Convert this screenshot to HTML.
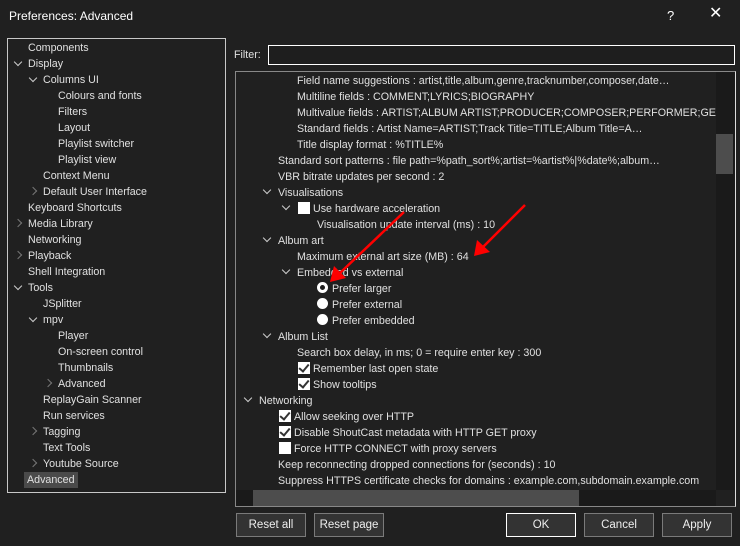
<!DOCTYPE html><html><head><style>
*{margin:0;padding:0;box-sizing:border-box}
body{width:740px;height:546px;background:#202020;font-family:"Liberation Sans",sans-serif;font-size:10.7px;color:#e0e0e0;position:relative;overflow:hidden}
.a{position:absolute;white-space:nowrap;line-height:16px;margin-top:1px}
.btn{position:absolute;top:513px;height:24px;width:70px;border:1px solid #7a7a7a;background:#333;text-align:center;line-height:22px;color:#eee;font-size:11.5px}
.cb{position:absolute;width:12px;height:12px;background:#fff}
.cb.k::after{content:"";position:absolute;left:3px;top:0px;width:4px;height:8px;border:solid #333;border-width:0 2px 2px 0;transform:rotate(40deg)}
.rd{position:absolute;width:11px;height:11px;border-radius:50%;background:#fff}
.ch{position:absolute;width:6px;height:6px;border:solid #ccc;border-width:0 1.5px 1.5px 0;transform:rotate(45deg)}
.cr{position:absolute;width:6px;height:6px;border:solid #777;border-width:0 1.5px 1.5px 0;transform:rotate(-45deg)}
#clip{position:absolute;left:236px;top:72px;width:480px;height:418px;overflow:hidden}
#clip>div{margin-left:-236px;margin-top:-72px;position:relative}
</style></head><body>
<div class="a" style="left:9px;top:7px;font-size:12px;color:#fff">Preferences: Advanced</div>
<div class="a" style="left:667px;top:7px;font-size:13px;color:#fff">?</div>
<div class="a" style="left:709px;top:5px;font-size:16px;color:#fff">✕</div>
<div style="position:absolute;left:7px;top:38px;width:219px;height:455px;border:1px solid #c8c8c8"></div>
<div class="a" style="left:28px;top:39px">Components</div>
<div class="ch" style="left:15px;top:59px"></div><div class="a" style="left:28px;top:55px">Display</div>
<div class="ch" style="left:30px;top:75px"></div><div class="a" style="left:43px;top:71px">Columns UI</div>
<div class="a" style="left:58px;top:87px">Colours and fonts</div>
<div class="a" style="left:58px;top:103px">Filters</div>
<div class="a" style="left:58px;top:119px">Layout</div>
<div class="a" style="left:58px;top:135px">Playlist switcher</div>
<div class="a" style="left:58px;top:151px">Playlist view</div>
<div class="a" style="left:43px;top:167px">Context Menu</div>
<div class="cr" style="left:30px;top:188px"></div><div class="a" style="left:43px;top:183px">Default User Interface</div>
<div class="a" style="left:28px;top:199px">Keyboard Shortcuts</div>
<div class="cr" style="left:15px;top:220px"></div><div class="a" style="left:28px;top:215px">Media Library</div>
<div class="a" style="left:28px;top:231px">Networking</div>
<div class="cr" style="left:15px;top:252px"></div><div class="a" style="left:28px;top:247px">Playback</div>
<div class="a" style="left:28px;top:263px">Shell Integration</div>
<div class="ch" style="left:15px;top:283px"></div><div class="a" style="left:28px;top:279px">Tools</div>
<div class="a" style="left:43px;top:295px">JSplitter</div>
<div class="ch" style="left:30px;top:315px"></div><div class="a" style="left:43px;top:311px">mpv</div>
<div class="a" style="left:58px;top:327px">Player</div>
<div class="a" style="left:58px;top:343px">On-screen control</div>
<div class="a" style="left:58px;top:359px">Thumbnails</div>
<div class="cr" style="left:45px;top:380px"></div><div class="a" style="left:58px;top:375px">Advanced</div>
<div class="a" style="left:43px;top:391px">ReplayGain Scanner</div>
<div class="a" style="left:43px;top:407px">Run services</div>
<div class="cr" style="left:30px;top:428px"></div><div class="a" style="left:43px;top:423px">Tagging</div>
<div class="a" style="left:43px;top:439px">Text Tools</div>
<div class="cr" style="left:30px;top:460px"></div><div class="a" style="left:43px;top:455px">Youtube Source</div>
<div class="a" style="left:24px;top:471px;background:#4a4a4a;padding:0 3px">Advanced</div>

<div class="a" style="left:234px;top:46px">Filter:</div>
<div style="position:absolute;left:268px;top:45px;width:467px;height:20px;border:1px solid #fff;background:#1e1e1e"></div>
<div style="position:absolute;left:235px;top:71px;width:501px;height:436px;border:1px solid #888;border-right-color:#ddd"></div>
<div style="position:absolute;left:716px;top:72px;width:19px;height:418px;background:#1a1a1a"></div>
<div style="position:absolute;left:716px;top:134px;width:17px;height:40px;background:#4d4d4d"></div>
<div style="position:absolute;left:236px;top:490px;width:480px;height:16px;background:#1a1a1a"></div>
<div style="position:absolute;left:253px;top:490px;width:326px;height:16px;background:#4d4d4d"></div>
<div id="clip"><div>
<div class="a" style="left:297px;top:72px">Field name suggestions : artist,title,album,genre,tracknumber,composer,date…</div>
<div class="a" style="left:297px;top:88px">Multiline fields : COMMENT;LYRICS;BIOGRAPHY</div>
<div class="a" style="left:297px;top:104px">Multivalue fields : ARTIST;ALBUM ARTIST;PRODUCER;COMPOSER;PERFORMER;GE…</div>
<div class="a" style="left:297px;top:120px">Standard fields : Artist Name=ARTIST;Track Title=TITLE;Album Title=A…</div>
<div class="a" style="left:297px;top:136px">Title display format : %TITLE%</div>
<div class="a" style="left:278px;top:152px">Standard sort patterns : file path=%path_sort%;artist=%artist%|%date%;album…</div>
<div class="a" style="left:278px;top:168px">VBR bitrate updates per second : 2</div>
<div class="ch" style="left:264px;top:187px"></div><div class="a" style="left:278px;top:184px">Visualisations</div>
<div class="ch" style="left:283px;top:203px"></div><div class="cb" style="left:298px;top:202px"></div><div class="a" style="left:313px;top:200px">Use hardware acceleration</div>
<div class="a" style="left:317px;top:216px">Visualisation update interval (ms) : 10</div>
<div class="ch" style="left:264px;top:235px"></div><div class="a" style="left:278px;top:232px">Album art</div>
<div class="a" style="left:297px;top:248px">Maximum external art size (MB) : 64</div>
<div class="ch" style="left:283px;top:267px"></div><div class="a" style="left:297px;top:264px">Embedded vs external</div>
<div class="rd" style="left:317px;top:282px;background:#1e1e1e;border:3px solid #fff"></div><div class="a" style="left:332px;top:280px">Prefer larger</div>
<div class="rd" style="left:317px;top:298px"></div><div class="a" style="left:332px;top:296px">Prefer external</div>
<div class="rd" style="left:317px;top:314px"></div><div class="a" style="left:332px;top:312px">Prefer embedded</div>
<div class="ch" style="left:264px;top:331px"></div><div class="a" style="left:278px;top:328px">Album List</div>
<div class="a" style="left:297px;top:344px">Search box delay, in ms; 0 = require enter key : 300</div>
<div class="cb k" style="left:298px;top:362px"></div><div class="a" style="left:313px;top:360px">Remember last open state</div>
<div class="cb k" style="left:298px;top:378px"></div><div class="a" style="left:313px;top:376px">Show tooltips</div>
<div class="ch" style="left:245px;top:395px"></div><div class="a" style="left:259px;top:392px">Networking</div>
<div class="cb k" style="left:279px;top:410px"></div><div class="a" style="left:294px;top:408px">Allow seeking over HTTP</div>
<div class="cb k" style="left:279px;top:426px"></div><div class="a" style="left:294px;top:424px">Disable ShoutCast metadata with HTTP GET proxy</div>
<div class="cb" style="left:279px;top:442px"></div><div class="a" style="left:294px;top:440px">Force HTTP CONNECT with proxy servers</div>
<div class="a" style="left:278px;top:456px">Keep reconnecting dropped connections for (seconds) : 10</div>
<div class="a" style="left:278px;top:472px">Suppress HTTPS certificate checks for domains : example.com,subdomain.example.com</div>
</div></div>
<svg style="position:absolute;left:0;top:0" width="740" height="546"><g stroke="#f00" stroke-width="2.5" fill="#f00">
<line x1="404" y1="212" x2="340" y2="273"/><polygon points="330,282 334,266 346,278" stroke="none"/>
<line x1="525" y1="205" x2="482" y2="248"/><polygon points="474,256 477,240 490,252" stroke="none"/></g></svg>
<div class="btn" style="left:236px">Reset all</div>
<div class="btn" style="left:314px">Reset page</div>
<div class="btn" style="left:506px;border-color:#fff">OK</div>
<div class="btn" style="left:584px">Cancel</div>
<div class="btn" style="left:662px">Apply</div>
</body></html>
